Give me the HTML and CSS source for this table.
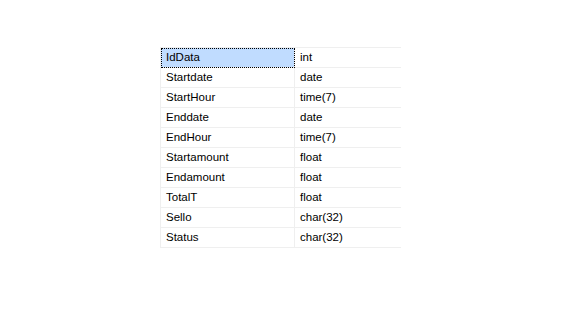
FILE: index.html
```html
<!DOCTYPE html>
<html>
<head>
<meta charset="utf-8">
<link rel="stylesheet" href="styles.css">
</head>
<body>
<div class="page">
  <table class="grid">
    <tr><td class="name selected">IdData</td><td class="type">int</td></tr>
    <tr><td class="name">Startdate</td><td class="type">date</td></tr>
    <tr><td class="name">StartHour</td><td class="type">time(7)</td></tr>
    <tr><td class="name">Enddate</td><td class="type">date</td></tr>
    <tr><td class="name">EndHour</td><td class="type">time(7)</td></tr>
    <tr><td class="name">Startamount</td><td class="type">float</td></tr>
    <tr><td class="name">Endamount</td><td class="type">float</td></tr>
    <tr><td class="name">TotalT</td><td class="type">float</td></tr>
    <tr><td class="name">Sello</td><td class="type">char(32)</td></tr>
    <tr><td class="name">Status</td><td class="type">char(32)</td></tr>
  </table>
</div>
</body>
</html>
```
FILE: styles.css
```css
html, body {
  margin: 0;
  padding: 0;
  background: #ffffff;
}
.page {
  width: 576px;
  height: 324px;
  padding: 47px 0 0 160px;
  box-sizing: border-box;
}
.grid {
  border-collapse: collapse;
  font-family: "Liberation Sans", Arial, sans-serif;
  font-size: 11.5px;
  color: #000;
}
.grid td {
  height: 19px;
  padding: 0 0 0 5px;
  border: 1px solid #efefef;
  border-right: none;
  box-sizing: border-box;
  line-height: 19px;
  white-space: nowrap;
}
.grid td.name {
  width: 134px;
}
.grid td.type {
  width: 106px;
  padding-left: 5px;
}
.grid td.selected {
  background: #c0dcff;
  outline: 1px dotted #000;
  outline-offset: -1px;
}
```
